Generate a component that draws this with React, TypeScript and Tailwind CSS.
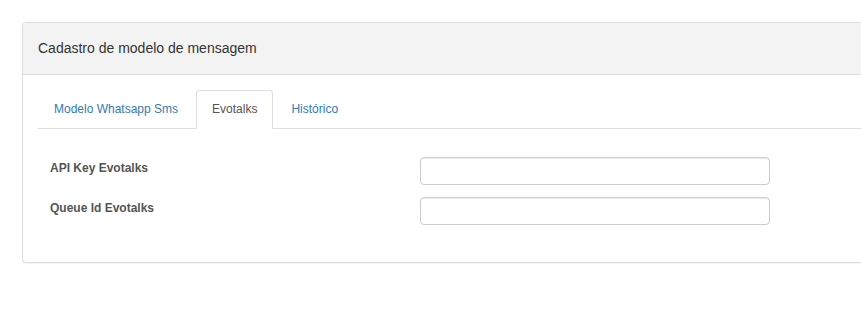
export default function App() {
  return (
    <div
      className="w-[861px] h-[329px] overflow-hidden bg-white pt-[22px] pl-[22px] text-[#333]"
      style={{ fontFamily: '"Liberation Sans", Arial, sans-serif' }}
    >
      <div className="w-[900px] border border-[#ddd] rounded-[4px] bg-white shadow-[0_1px_1px_rgba(0,0,0,0.05)]">
        <div className="h-[52px] bg-[#f3f3f3] border-b border-[#ddd] rounded-t-[3px] px-[15px] flex items-center">
          <h3 className="text-[14px] text-[#333]">Cadastro de modelo de mensagem</h3>
        </div>
        <div className="p-[15px] pb-[37px]">
          <ul className="flex border-b border-[#ddd] text-[12px] leading-[17px]">
            <li className="mr-[2px] -mb-px">
              <a className="block px-[15px] py-[10px] border border-transparent text-[#337ab7]">
                Modelo Whatsapp Sms
              </a>
            </li>
            <li className="mr-[2px] -mb-px">
              <a className="block px-[15px] py-[10px] border border-[#ddd] border-b-white rounded-t-[4px] bg-white text-[#555]">
                Evotalks
              </a>
            </li>
            <li className="mr-[2px] -mb-px">
              <a className="block px-[15px] py-[10px] border border-transparent text-[#337ab7]">
                Histórico
              </a>
            </li>
          </ul>
          <div className="pt-[28px] px-[12px] flex flex-col gap-[12px]">
            <div className="flex items-start">
              <label className="w-[370px] pt-[3px] text-[12px] leading-[17px] font-bold text-[#555]">
                API Key Evotalks
              </label>
              <input
                type="text"
                className="w-[350px] h-[28px] border border-[#ccc] rounded-[4px] px-[8px] text-[12px] shadow-[inset_0_1px_1px_rgba(0,0,0,0.075)] outline-none"
              />
            </div>
            <div className="flex items-start">
              <label className="w-[370px] pt-[3px] text-[12px] leading-[17px] font-bold text-[#555]">
                Queue Id Evotalks
              </label>
              <input
                type="text"
                className="w-[350px] h-[28px] border border-[#ccc] rounded-[4px] px-[8px] text-[12px] shadow-[inset_0_1px_1px_rgba(0,0,0,0.075)] outline-none"
              />
            </div>
          </div>
        </div>
      </div>
    </div>
  );
}
